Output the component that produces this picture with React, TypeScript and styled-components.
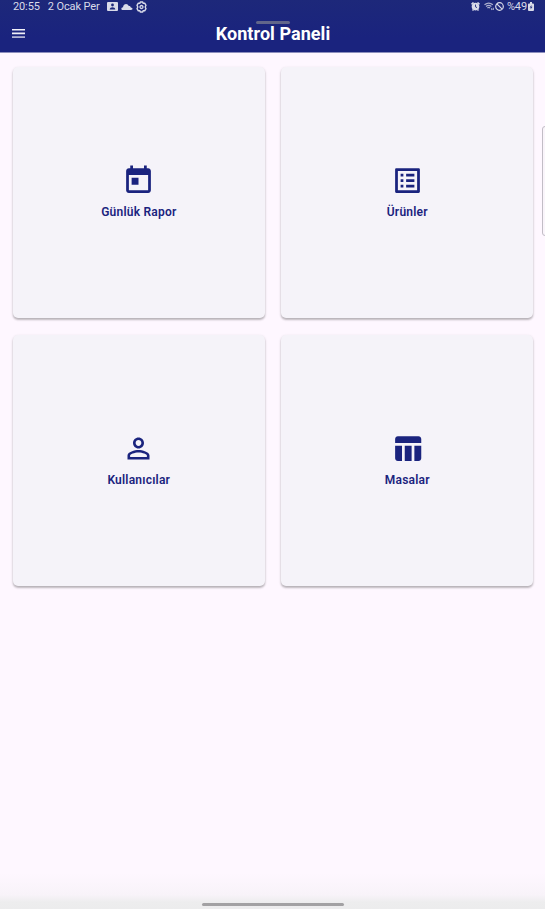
import React from "react";
import styled, { createGlobalStyle } from "styled-components";

const GlobalStyle = createGlobalStyle`
  * { box-sizing: border-box; }
  html, body { margin: 0; padding: 0; }
  body { font-family: Roboto, "Noto Sans", sans-serif; background: #fef7ff; overflow: hidden; }
  svg { display: block; flex: none; }
`;

const Screen = styled.div`
  position: relative;
  display: flex;
  flex-direction: column;
  width: 545px;
  height: 909px;
  overflow: hidden;
  background: #fef7ff;
`;

const Header = styled.header`
  position: relative;
  height: 53px;
  flex: none;
  color: #fff;
  background: linear-gradient(#1d287a 0, #1a237e 38px, #1a237e 100%);
  border-bottom: 1px solid #8d8fbd;
`;

const StatusBar = styled.div`
  display: flex;
  justify-content: space-between;
  height: 13px;
  padding: 0 11.5px 0 13px;
  color: #d9dbe9;
  font-size: 11px;
  line-height: 13px;
`;

const StatusGroup = styled.div<{ $gap: number }>`
  display: flex;
  align-items: center;
  gap: ${(p) => p.$gap}px;
  white-space: nowrap;
`;

const StatusText = styled.span<{ $start?: number; $end?: number }>`
  letter-spacing: -0.12px;
  margin-left: ${(p) => p.$start ?? 0}px;
  margin-right: ${(p) => p.$end ?? 0}px;
`;

const SignalIcons = styled.div`
  display: flex;
  align-items: center;
  margin-left: 2px;
`;

const Toolbar = styled.div`
  display: grid;
  grid-template-columns: 36px 1fr 35px;
  align-items: center;
  height: 41px;
`;

const MenuButton = styled.button`
  display: flex;
  width: 36px;
  height: 36px;
  padding: 0;
  border: 0;
  align-items: center;
  justify-content: center;
  background: none;
  color: #f1f1f8;
`;

const Title = styled.h1`
  margin: 0;
  text-align: center;
  font-size: 18px;
  font-weight: 700;
  line-height: 24px;
  letter-spacing: 0.05px;
`;

const DragHandle = styled.div`
  position: absolute;
  top: 21px;
  left: 256px;
  width: 34px;
  height: 3px;
  border-radius: 2px;
  background: #62668a;
`;

const CardGrid = styled.main`
  display: grid;
  grid-template-columns: 251.6px 252px;
  grid-auto-rows: 251px;
  gap: 17px 16.7px;
  padding: 14px 11px 14px 13px;
`;

const Card = styled.button`
  display: flex;
  flex-direction: column;
  align-items: center;
  justify-content: center;
  gap: 7px;
  padding: 0 0 2px;
  border: 0;
  border-radius: 5px;
  background: #f5f3f9;
  color: #1a237e;
  font-family: inherit;
  box-shadow: 0 2px 2px rgba(0, 0, 0, 0.2), 0 1px 3px rgba(0, 0, 0, 0.14);
`;

const CardLabel = styled.span`
  font-size: 12px;
  font-weight: 600;
  line-height: 16px;
  letter-spacing: 0.22px;
`;

const EdgePanel = styled.div`
  position: absolute;
  top: 126px;
  right: -4px;
  width: 7px;
  height: 110px;
  border: 1px solid #c2bdc6;
  border-radius: 3px;
  background: #faf5fb;
`;

const NavigationArea = styled.footer`
  position: absolute;
  left: 0;
  bottom: 0;
  display: flex;
  align-items: flex-end;
  justify-content: center;
  width: 100%;
  height: 36px;
  padding-bottom: 3px;
  background: linear-gradient(#fef7ff 0, #f8f3f9 22px, #ededee 29px, #ececed 100%);
`;

const HomeIndicator = styled.div`
  width: 142px;
  height: 3px;
  border-radius: 2px;
  background: #a2a1a3;
`;

const ICONS = {
  today:
    "M19 3h-1V1h-2v2H8V1H6v2H5c-1.11 0-1.99.9-1.99 2L3 19c0 1.1.89 2 2 2h14c1.1 0 2-.9 2-2V5c0-1.1-.9-2-2-2zm0 16H5V8h14v11zM7 10h5v5H7z",
  list:
    "M19 5v14H5V5h14m1.1-2H3.9c-.5 0-.9.4-.9.9v16.2c0 .4.4.9.9.9h16.2c.4 0 .9-.5.9-.9V3.9c0-.5-.5-.9-.9-.9zM11 7h6v2h-6V7zm0 4h6v2h-6v-2zm0 4h6v2h-6zM7 7h2v2H7zm0 4h2v2H7zm0 4h2v2H7z",
  person:
    "M12 5.9c1.16 0 2.1.94 2.1 2.1s-.94 2.1-2.1 2.1S9.9 9.16 9.9 8s.94-2.1 2.1-2.1m0 9c2.97 0 6.1 1.46 6.1 2.1v1.1H5.9V17c0-.64 3.13-2.1 6.1-2.1M12 4C9.79 4 8 5.79 8 8s1.79 4 4 4 4-1.79 4-4-1.79-4-4-4zm0 9c-2.67 0-8 1.34-8 4v3h16v-3c0-2.66-5.33-4-8-4z",
  table:
    "M10 10.02h5V21h-5V10.02zM17 21h3c1.1 0 2-.9 2-2v-9h-5v11zm3-18H5c-1.1 0-2 .9-2 2v3h19V5c0-1.1-.9-2-2-2zM3 19c0 1.1.9 2 2 2h3V10H3v9z",
};

const CARDS: { label: string; icon: keyof typeof ICONS }[] = [
  { label: "Günlük Rapor", icon: "today" },
  { label: "Ürünler", icon: "list" },
  { label: "Kullanıcılar", icon: "person" },
  { label: "Masalar", icon: "table" },
];

const CardIcon = ({ name }: { name: keyof typeof ICONS }) => (
  <svg width="33" height="33" viewBox="0 0 24 24" fill="currentColor">
    <path d={ICONS[name]} />
  </svg>
);

const ContactIcon = () => (
  <svg width="11" height="9" viewBox="0 0 11 9">
    <rect width="11" height="9" rx="1" fill="currentColor" />
    <circle cx="5.5" cy="3" r="1.4" fill="#1d287a" />
    <path d="M2.7 7.4c.2-3 5.4-3 5.6 0z" fill="#1d287a" />
  </svg>
);

const CloudIcon = () => (
  <svg width="12" height="8" viewBox="0 0 12 8" fill="currentColor">
    <path d="M2 7C-.3 7-.1 4.400 2 4.200 2.500.3 6.600-.1 7.800 3c1.200-.2 1.900.6 2 1.400C12.200 4.600 12 7 10 7z" />
  </svg>
);

const GearIcon = () => (
  <svg width="11" height="12" viewBox="0 0 11 12" fill="none" stroke="currentColor">
    <path
      d="M4.300 1h2.400l.5 1.400 1.500-.2L10 4.300 9.200 6l.8 1.700-1.300 2.100-1.500-.2-.5 1.400H4.300l-.5-1.400-1.500.2L1 7.700 1.800 6 1 4.300l1.300-2.100 1.500.2z"
      strokeWidth="1.4"
      strokeLinejoin="round"
    />
    <circle cx="5.5" cy="6" r="1.5" strokeWidth="1.3" />
  </svg>
);

const AlarmIcon = () => (
  <svg width="9" height="9" viewBox="0 0 9 9">
    <path d="M.4 2.300 2.500.5M8.600 2.300 6.500.5M1.500 8.500l1-1M7.500 8.500l-1-1" stroke="currentColor" strokeWidth="1.5" />
    <circle cx="4.5" cy="4.6" r="3.8" fill="currentColor" />
    <path d="M4.500 2.600v2.200l1.500.8" stroke="#1d287a" fill="none" strokeWidth=".9" />
  </svg>
);

const WifiIcon = () => (
  <svg width="11" height="9" viewBox="0 0 11 9" fill="none" stroke="currentColor" opacity=".75">
    <path d="M.5 2.800q4.200-3.400 8.400 0M2 4.500q2.700-2.200 5.400 0M3.400 6q1.400-1.100 2.700 0" strokeWidth="1.2" />
    <path d="m7.200 6.400.9 1.500M9.300 8V5.800" strokeWidth="1.1" />
  </svg>
);

const BlockedIcon = () => (
  <svg width="9" height="9" viewBox="0 0 9 9" fill="none" stroke="currentColor" strokeWidth="1.2">
    <circle cx="4.5" cy="4.5" r="3.8" />
    <path d="m1.800 1.800 5.400 5.400" />
  </svg>
);

const BatteryIcon = () => (
  <svg width="6" height="9" viewBox="0 0 6 9">
    <path d="M2 0h2v1.500h1q1 0 1 1v5.500q0 1-1 1H1Q0 9 0 8V2.500q0-1 1-1h1z" fill="currentColor" />
    <path d="M3.600 2.900 1.600 5.500h1.300l-.4 2 2-2.700H3.200z" fill="#1d287a" />
  </svg>
);

export default function App() {
  return (
    <>
      <GlobalStyle />
      <Screen>
        <Header>
          <StatusBar>
            <StatusGroup $gap={3}>
              <StatusText $end={5}>20:55</StatusText>
              <StatusText $end={4}>2 Ocak Per</StatusText>
              <ContactIcon />
              <CloudIcon />
              <GearIcon />
            </StatusGroup>
            <StatusGroup $gap={2}>
              <AlarmIcon />
              <SignalIcons>
                <WifiIcon />
                <BlockedIcon />
              </SignalIcons>
              <StatusText $start={1} $end={-1.5}>%49</StatusText>
              <BatteryIcon />
            </StatusGroup>
          </StatusBar>
          <Toolbar>
            <MenuButton aria-label="Menü">
              <svg width="13" height="9" viewBox="0 0 13 9" fill="currentColor">
                <path d="M0 0h13v1.600H0zM0 3.600h13v1.600H0z" />
                <path d="M0 7.200h13V9H0z" opacity=".7" />
              </svg>
            </MenuButton>
            <Title>Kontrol Paneli</Title>
          </Toolbar>
          <DragHandle />
        </Header>
        <CardGrid>
          {CARDS.map((card) => (
            <Card key={card.label}>
              <CardIcon name={card.icon} />
              <CardLabel>{card.label}</CardLabel>
            </Card>
          ))}
        </CardGrid>
        <EdgePanel />
        <NavigationArea>
          <HomeIndicator />
        </NavigationArea>
      </Screen>
    </>
  );
}
